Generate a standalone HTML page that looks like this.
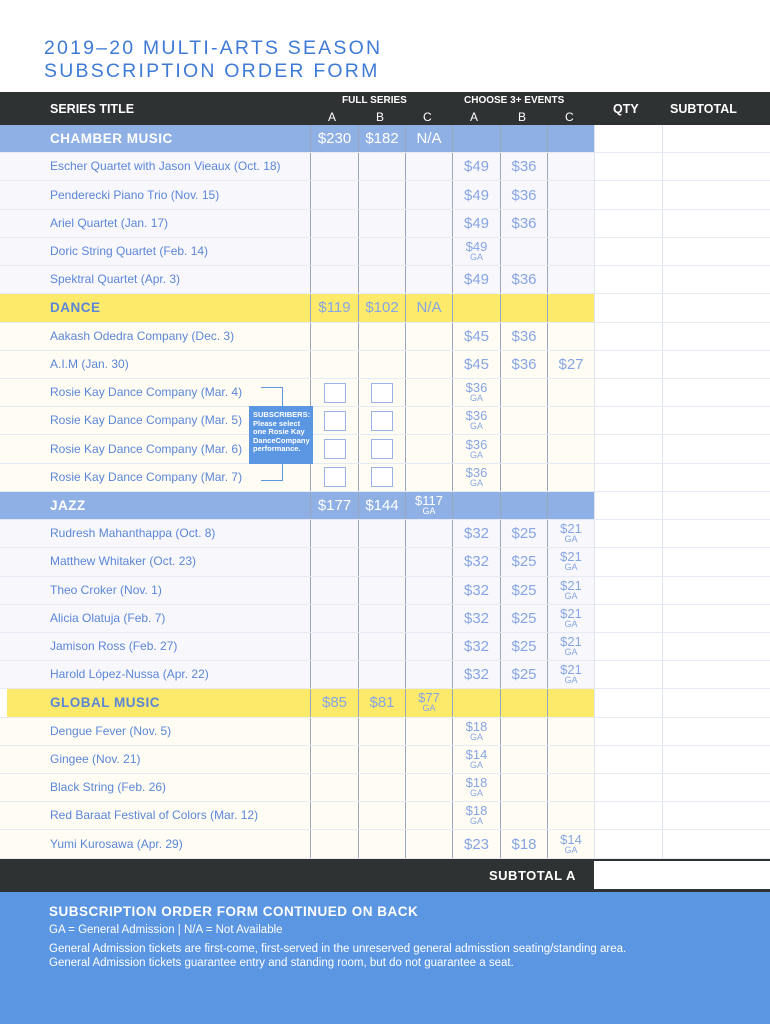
<!DOCTYPE html>
<html><head><meta charset="utf-8"><style>
*{margin:0;padding:0;box-sizing:border-box}
body{width:770px;height:1024px;background:#fff;font-family:"Liberation Sans",sans-serif;position:relative;overflow:hidden}
.title{position:absolute;left:44px;top:37px;color:#3f7bd6;font-size:19.5px;line-height:22.5px;letter-spacing:2.2px}
.hdr{position:absolute;left:0;top:92px;width:770px;height:33px;background:#2f3233;color:#fff}
.hdr div{position:absolute;font-weight:bold}
.rows{position:absolute;left:0;top:125px;width:770px}
.r{height:28.23px;display:grid;grid-template-columns:310px 48px 47px 47px 48px 47px 47px 68px 108px;border-bottom:1px solid #e6eaf5}
.r>div{border-left:1px solid #9aa6bd;display:flex;flex-direction:column;align-items:center;justify-content:center;color:#87a5e3;font-size:15px;line-height:15px}
.r>div:first-child{border-left:none;align-items:flex-start;padding-left:50px;font-size:12px;color:#5b86d8}
.r>div:nth-child(8),.r>div:nth-child(9){background:#fff;border-left:1px solid #dfe4ef}
.s>div:first-child{font-weight:bold;font-size:13.5px;letter-spacing:.5px}
.sb{background:#8fb0e4}.sb>div{color:#fff!important}.sb>div:first-child{color:#fff!important}
.sy{background:#fde96a}.sy>div:first-child{color:#5b86d8!important}
.sy>div:first-child{margin-left:7px;padding-left:43px!important}
.ib{background:#f8f8fc}.iy{background:#fffdf3}
.g{font-size:13px!important;line-height:12px!important}
.g small{display:block;font-size:9px;line-height:9px;text-align:center}
.cb{width:22px;height:20px;border:1.5px solid #9ab4e8;background:#fff}
.foot{position:absolute;left:0;top:859px;width:770px;height:33px;background:#2f3233}
.blue{position:absolute;left:0;top:892px;width:770px;height:132px;background:#5b96e3;color:#fff}
</style></head><body>
<div class="title">2019–20 MULTI-ARTS SEASON<br>SUBSCRIPTION ORDER FORM</div>
<div class="hdr">
<div style="left:50px;top:10px;font-size:12.5px">SERIES TITLE</div>
<div style="left:342px;top:3px;font-size:10px">FULL SERIES</div>
<div style="left:464px;top:3px;font-size:10px">CHOOSE 3+ EVENTS</div>
<div style="left:328px;top:18px;font-size:12px;font-weight:normal">A</div>
<div style="left:376px;top:18px;font-size:12px;font-weight:normal">B</div>
<div style="left:423px;top:18px;font-size:12px;font-weight:normal">C</div>
<div style="left:470px;top:18px;font-size:12px;font-weight:normal">A</div>
<div style="left:518px;top:18px;font-size:12px;font-weight:normal">B</div>
<div style="left:565px;top:18px;font-size:12px;font-weight:normal">C</div>
<div style="left:613px;top:10px;font-size:12.5px">QTY</div>
<div style="left:670px;top:10px;font-size:12.5px">SUBTOTAL</div>
</div>
<div class="rows">
<div class="r s sb"><div>CHAMBER MUSIC</div><div>$230</div><div>$182</div><div>N/A</div><div></div><div></div><div></div><div></div><div></div></div>
<div class="r ib"><div>Escher Quartet with Jason Vieaux (Oct. 18)</div><div></div><div></div><div></div><div>$49</div><div>$36</div><div></div><div></div><div></div></div>
<div class="r ib"><div>Penderecki Piano Trio (Nov. 15)</div><div></div><div></div><div></div><div>$49</div><div>$36</div><div></div><div></div><div></div></div>
<div class="r ib"><div>Ariel Quartet (Jan. 17)</div><div></div><div></div><div></div><div>$49</div><div>$36</div><div></div><div></div><div></div></div>
<div class="r ib"><div>Doric String Quartet (Feb. 14)</div><div></div><div></div><div></div><div class="g">$49<small>GA</small></div><div></div><div></div><div></div><div></div></div>
<div class="r ib"><div>Spektral Quartet (Apr. 3)</div><div></div><div></div><div></div><div>$49</div><div>$36</div><div></div><div></div><div></div></div>
<div class="r s sy"><div>DANCE</div><div>$119</div><div>$102</div><div>N/A</div><div></div><div></div><div></div><div></div><div></div></div>
<div class="r iy"><div>Aakash Odedra Company (Dec. 3)</div><div></div><div></div><div></div><div>$45</div><div>$36</div><div></div><div></div><div></div></div>
<div class="r iy"><div>A.I.M (Jan. 30)</div><div></div><div></div><div></div><div>$45</div><div>$36</div><div>$27</div><div></div><div></div></div>
<div class="r iy"><div>Rosie Kay Dance Company (Mar. 4)</div><div><span class="cb"></span></div><div><span class="cb"></span></div><div></div><div class="g">$36<small>GA</small></div><div></div><div></div><div></div><div></div></div>
<div class="r iy"><div>Rosie Kay Dance Company (Mar. 5)</div><div><span class="cb"></span></div><div><span class="cb"></span></div><div></div><div class="g">$36<small>GA</small></div><div></div><div></div><div></div><div></div></div>
<div class="r iy"><div>Rosie Kay Dance Company (Mar. 6)</div><div><span class="cb"></span></div><div><span class="cb"></span></div><div></div><div class="g">$36<small>GA</small></div><div></div><div></div><div></div><div></div></div>
<div class="r iy"><div>Rosie Kay Dance Company (Mar. 7)</div><div><span class="cb"></span></div><div><span class="cb"></span></div><div></div><div class="g">$36<small>GA</small></div><div></div><div></div><div></div><div></div></div>
<div class="r s sb"><div>JAZZ</div><div>$177</div><div>$144</div><div class="g">$117<small>GA</small></div><div></div><div></div><div></div><div></div><div></div></div>
<div class="r ib"><div>Rudresh Mahanthappa (Oct. 8)</div><div></div><div></div><div></div><div>$32</div><div>$25</div><div class="g">$21<small>GA</small></div><div></div><div></div></div>
<div class="r ib"><div>Matthew Whitaker (Oct. 23)</div><div></div><div></div><div></div><div>$32</div><div>$25</div><div class="g">$21<small>GA</small></div><div></div><div></div></div>
<div class="r ib"><div>Theo Croker (Nov. 1)</div><div></div><div></div><div></div><div>$32</div><div>$25</div><div class="g">$21<small>GA</small></div><div></div><div></div></div>
<div class="r ib"><div>Alicia Olatuja (Feb. 7)</div><div></div><div></div><div></div><div>$32</div><div>$25</div><div class="g">$21<small>GA</small></div><div></div><div></div></div>
<div class="r ib"><div>Jamison Ross (Feb. 27)</div><div></div><div></div><div></div><div>$32</div><div>$25</div><div class="g">$21<small>GA</small></div><div></div><div></div></div>
<div class="r ib"><div>Harold López-Nussa (Apr. 22)</div><div></div><div></div><div></div><div>$32</div><div>$25</div><div class="g">$21<small>GA</small></div><div></div><div></div></div>
<div class="r s sy" style="background:linear-gradient(90deg,#fff 7px,#fde96a 7px)"><div>GLOBAL MUSIC</div><div>$85</div><div>$81</div><div class="g">$77<small>GA</small></div><div></div><div></div><div></div><div></div><div></div></div>
<div class="r iy"><div>Dengue Fever (Nov. 5)</div><div></div><div></div><div></div><div class="g">$18<small>GA</small></div><div></div><div></div><div></div><div></div></div>
<div class="r iy"><div>Gingee (Nov. 21)</div><div></div><div></div><div></div><div class="g">$14<small>GA</small></div><div></div><div></div><div></div><div></div></div>
<div class="r iy"><div>Black String (Feb. 26)</div><div></div><div></div><div></div><div class="g">$18<small>GA</small></div><div></div><div></div><div></div><div></div></div>
<div class="r iy"><div>Red Baraat Festival of Colors (Mar. 12)</div><div></div><div></div><div></div><div class="g">$18<small>GA</small></div><div></div><div></div><div></div><div></div></div>
<div class="r iy"><div>Yumi Kurosawa (Apr. 29)</div><div></div><div></div><div></div><div>$23</div><div>$18</div><div class="g">$14<small>GA</small></div><div></div><div></div></div>
</div>
<div style="position:absolute;left:261px;top:387px;width:22px;height:94px;border:1.5px solid #5b96e3;border-left:none"></div>
<div style="position:absolute;left:249px;top:406px;width:64px;height:58px;background:#5b96e3;color:#fff;font-size:7.5px;line-height:8.5px;font-weight:bold;padding:5px 4px">SUBSCRIBERS:<br>Please select one Rosie Kay DanceCompany performance.</div>
<div class="foot"><div style="position:absolute;left:489px;top:9px;color:#fff;font-weight:bold;font-size:13px;letter-spacing:.5px">SUBTOTAL A</div><div style="position:absolute;left:594px;top:2px;width:176px;height:28px;background:#fff"></div></div>
<div class="blue">
<div style="position:absolute;left:49px;top:12px;font-size:13.5px;font-weight:bold;letter-spacing:.5px">SUBSCRIPTION ORDER FORM CONTINUED ON BACK</div>
<div style="position:absolute;left:49px;top:32px;font-size:11.5px">GA = General Admission | N/A = Not Available</div>
<div style="position:absolute;left:49px;top:50px;font-size:11.5px;line-height:14px">General Admission tickets are first-come, first-served in the unreserved general admisstion seating/standing area.<br>General Admission tickets guarantee entry and standing room, but do not guarantee a seat.</div>
</div>
</body></html>
